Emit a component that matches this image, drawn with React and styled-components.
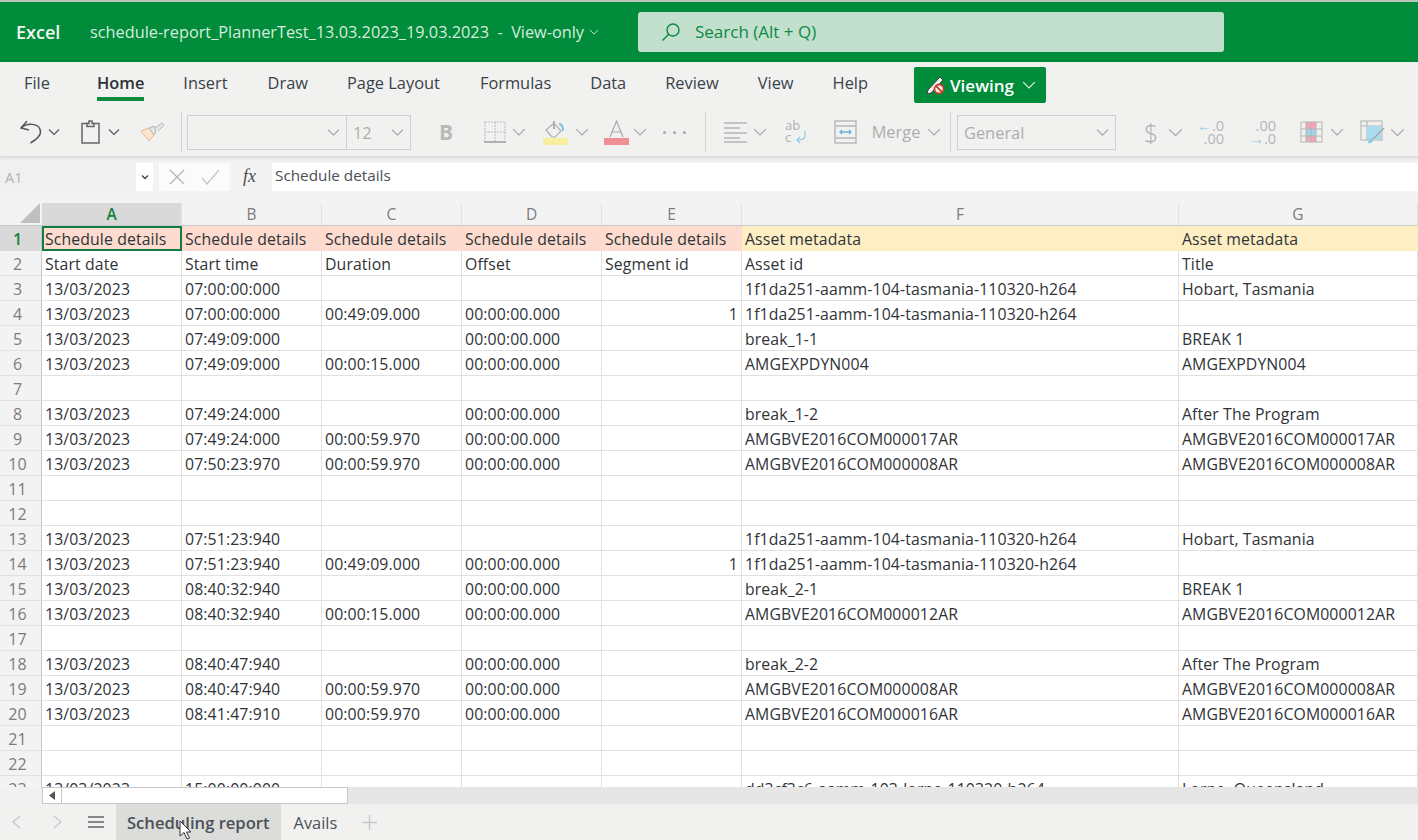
import React from "react";
import styled, { createGlobalStyle } from "styled-components";

const Global = createGlobalStyle`
  html, body { margin: 0; padding: 0; width: 1418px; height: 840px; overflow: hidden; background: #f3f3f3; }
  * { box-sizing: border-box; }
  body { font-family: "Open Sans", "Noto Sans", sans-serif; }
`;

const Page = styled.div`
  width: 1418px; height: 840px; display: flex; flex-direction: column; overflow: hidden; background: #f3f3f3;
`;
const TitleBar = styled.header`
  height: 62px; flex: none; background: #008c3a; border-top: 2px solid #b9c4bc;
  display: flex; align-items: center; color: #fff;
`;
const Brand = styled.div`
  width: 90px; padding-left: 16px; font-size: 18px; font-weight: 600; color: #f2f7f3;
`;
const DocName = styled.div`
  width: 548px; font-size: 16.3px; color: #d7ecdf; display: flex; align-items: center; gap: 5px; white-space: nowrap;
`;
const SearchBox = styled.div`
  width: 586px; height: 40px; border-radius: 3px; background: #c3dfcd; color: #0a8a45;
  display: flex; align-items: center; gap: 14px; padding-left: 23px; font-size: 17px; margin-top: -1px;
`;
const TabBar = styled.nav`
  height: 45px; flex: none; display: flex; align-items: flex-start; padding: 0 0 0 24px; background: #f1f1f0;
`;
const TabItem = styled.div`
  font-size: 16.4px; line-height: 22px; margin-top: 10px; margin-right: ${p => p.$gap}px; color: #39424a;
  position: relative; font-weight: ${p => (p.$active ? 600 : 400)}; white-space: nowrap;
  ${p => p.$active && `
    color: #2c3136;
    &::after { content: ""; position: absolute; left: 0; right: 0; top: 25px; height: 4px; background: #10893e; }
  `}
`;
const ViewingButton = styled.div`
  width: 132px; height: 36px; margin-top: 5px; margin-left: auto; margin-right: 372px; background: #008c3a; border-radius: 2px; color: #fff;
  display: flex; align-items: center; padding-left: 12px; gap: 4px; font-size: 17px; font-weight: 600;
`;
const Toolbar = styled.div`
  height: 50px; flex: none; display: flex; align-items: center; padding: 1px 0 0 20px; background: #f1f1f0;
  border-bottom: 1px solid #dcdcdc; box-shadow: 0 2px 3px rgba(0,0,0,.08); color: #b5b5b5; position: relative;
`;
const Group = styled.div`
  display: flex; align-items: center; gap: ${p => p.$gap ?? 3}px; margin-left: ${p => p.$left ?? 0}px; flex: none;
`;
const Separator = styled.div`
  width: 1px; height: 40px; background: #d4d4d4; flex: none; margin-left: ${p => p.$left}px;
`;
const Select = styled.div`
  height: 35px; width: ${p => p.$w}px; border: 1px solid #cfcfcf; margin-left: ${p => p.$left ?? 0}px;
  ${p => p.$noLeft && "border-left: 0;"}
  display: flex; align-items: center; justify-content: space-between; padding: 0 6px;
  font-size: 16.4px; color: #adadad; flex: none;
`;
const GreyLabel = styled.span`
  font-size: ${p => p.$size ?? 16.4}px; font-weight: ${p => p.$weight ?? 400}; color: #adadad; width: ${p => p.$w}px; line-height: 1; text-align: center;
`;
const BoldB = styled.span`
  font-size: 21px; font-weight: 700; color: #b9b9b9; width: 16px; text-align: center;
`;
const Dots = styled.span`
  width: 23px; display: flex; justify-content: space-between;
`;
const Dot = styled.i`
  width: 3px; height: 3px; border-radius: 50%; background: #a9a9a9;
`;
const Decimal = styled.span`
  display: flex; flex-direction: column; align-items: flex-end; width: ${p => p.$w}px; font-size: 14.5px; line-height: 13px; color: #b5b5b5; white-space: nowrap;
`;
const Arrow = styled.b`
  color: #8fcae6; font-weight: 400; font-size: 15px;
`;
const FormulaRow = styled.div`
  height: 28px; flex: none; margin-top: 6px; display: flex; background: #f3f3f3;
`;
const NameBox = styled.div`
  width: 153px; height: 100%; display: flex; align-items: center; justify-content: space-between;
  background: #f0f0f0; color: #b3b3b3; font-size: 14.5px; padding-left: 5px;
`;
const NameCaret = styled.div`
  width: 17px; height: 100%; background: #fff; display: flex; align-items: center; justify-content: center; color: #555;
`;
const FxButtons = styled.div`
  width: 71px; height: 100%; margin-left: 6px; background: #fbfbfb; display: flex; align-items: center; justify-content: center; gap: 16px;
`;
const FxLabel = styled.div`
  width: 42px; height: 100%; display: flex; align-items: center; justify-content: center; padding: 0 3px 1px 0;
  font-family: "Liberation Serif", serif; font-style: italic; font-size: 18px; color: #4d4d4d;
`;
const FormulaInput = styled.div`
  flex: 1; height: 100%; background: #fff; padding-left: 3px; font-size: 15.3px; line-height: 24px; color: #4a5056;
`;
const SheetArea = styled.div`
  flex: none; height: 584px; margin-top: 12px; overflow: hidden; background: #fff;
  display: grid; grid-template-columns: 42px 140px 140px 140px 140px 140px 437px 239px;
  grid-template-rows: 23px; grid-auto-rows: 25px; align-content: start;
`;
const Corner = styled.div`
  background: #f3f3f3; display: flex; justify-content: flex-end; align-items: flex-end; padding: 0 2px 2px 0;
  border-bottom: 1px solid #c9c9c9;
`;
const ColHead = styled.div`
  background: ${p => (p.$on ? "#d9d9d9" : "#f3f3f3")};
  color: ${p => (p.$on ? "#15803f" : "#7c7c7c")}; font-weight: ${p => (p.$on ? 600 : 400)};
  display: flex; align-items: center; justify-content: center; font-size: 15.5px;
  border-right: 1px solid #e2e2e2; border-bottom: 1px solid #c9c9c9;
`;
const RowHead = styled.div`
  background: ${p => (p.$on ? "#d9d9d9" : "#f3f3f3")};
  color: ${p => (p.$on ? "#15803f" : "#7c7c7c")}; font-weight: ${p => (p.$on ? 600 : 400)};
  display: flex; align-items: center; justify-content: center; font-size: 16px;
  border-right: 1px solid #c9c9c9; border-bottom: 1px solid ${p => (p.$on ? "#d9d9d9" : "#e2e2e2")};
  padding: 1px 6px 0 0;
`;
const Cell = styled.div`
  background: ${p => p.$bg || "#fff"};
  border-right: 1px solid ${p => (p.$bg ? p.$bg : "#e1e1e1")};
  border-bottom: 1px solid ${p => (p.$bg ? p.$bg : "#e1e1e1")};
  padding: 1px 3px 0; font-size: 15.8px; letter-spacing: .12px; line-height: 25px; color: #2f3338; white-space: nowrap;
  overflow: hidden; position: relative; text-align: ${p => (p.$right ? "right" : "left")};
  ${p => p.$sel && "outline: 2px solid #107c41; outline-offset: -2px; z-index: 1; overflow: visible;"}
`;
const ScrollRow = styled.div`
  height: 17px; flex: none; display: flex; padding-left: 42px; background: #e6e6e6; position: relative;
`;
const ScrollGutter = styled.div`
  position: absolute; left: 0; top: 0; bottom: 0; width: 42px; background: #f1f1f1;
`;
const ScrollButton = styled.div`
  width: 20px; height: 100%; background: #fff; border: 1px solid #c8c8c8; display: flex; align-items: center; justify-content: center;
`;
const ScrollThumb = styled.div`
  width: 286px; height: 100%; background: #fff; border: 1px solid #c8c8c8; border-left: 0;
`;
const SheetTabs = styled.footer`
  height: 36px; flex: none; display: flex; align-items: stretch; background: #f1f1f0; position: relative;
`;
const NavGroup = styled.div`
  width: 116px; display: flex; align-items: center; padding-left: 11px;
`;
const NavSlot = styled.div`
  width: ${p => p.$w}px; display: flex; justify-content: flex-start;
`;
const SheetTab = styled.div`
  padding: 0 ${p => (p.$active ? 11 : 13)}px; font-size: ${p => (p.$active ? 16.6 : 16.4)}px; display: flex; align-items: center; color: #4b5158;
  background: ${p => (p.$active ? "#dcdcda" : "transparent")}; font-weight: ${p => (p.$active ? 600 : 400)};
`;
const AddTab = styled.div`
  display: flex; align-items: center; margin-left: 12px;
`;
const Cursor = styled.svg`
  position: absolute; left: 179px; top: 16px;
`;

const Chev = ({ c = "#8a8a8a", s = 14 }) => (
  <svg width={s} height={s} viewBox="0 0 12 12" fill="none" stroke={c} strokeWidth="1.1"><path d="M1 3.5l5 5 5-5" /></svg>
);

const columns = ["A", "B", "C", "D", "E", "F", "G"];
const S = "Schedule details", M = "Asset metadata";
const T = "1f1da251-aamm-104-tasmania-110320-h264";
const D = "13/03/2023", Z = "00:00:00.000";
const rows = [
  [S, S, S, S, S, M, M],
  ["Start date", "Start time", "Duration", "Offset", "Segment id", "Asset id", "Title"],
  [D, "07:00:00:000", "", "", "", T, "Hobart, Tasmania"],
  [D, "07:00:00:000", "00:49:09.000", Z, "1", T, ""],
  [D, "07:49:09:000", "", Z, "", "break_1-1", "BREAK 1"],
  [D, "07:49:09:000", "00:00:15.000", Z, "", "AMGEXPDYN004", "AMGEXPDYN004"],
  ["", "", "", "", "", "", ""],
  [D, "07:49:24:000", "", Z, "", "break_1-2", "After The Program"],
  [D, "07:49:24:000", "00:00:59.970", Z, "", "AMGBVE2016COM000017AR", "AMGBVE2016COM000017AR"],
  [D, "07:50:23:970", "00:00:59.970", Z, "", "AMGBVE2016COM000008AR", "AMGBVE2016COM000008AR"],
  ["", "", "", "", "", "", ""],
  ["", "", "", "", "", "", ""],
  [D, "07:51:23:940", "", "", "", T, "Hobart, Tasmania"],
  [D, "07:51:23:940", "00:49:09.000", Z, "1", T, ""],
  [D, "08:40:32:940", "", Z, "", "break_2-1", "BREAK 1"],
  [D, "08:40:32:940", "00:00:15.000", Z, "", "AMGBVE2016COM000012AR", "AMGBVE2016COM000012AR"],
  ["", "", "", "", "", "", ""],
  [D, "08:40:47:940", "", Z, "", "break_2-2", "After The Program"],
  [D, "08:40:47:940", "00:00:59.970", Z, "", "AMGBVE2016COM000008AR", "AMGBVE2016COM000008AR"],
  [D, "08:41:47:910", "00:00:59.970", Z, "", "AMGBVE2016COM000016AR", "AMGBVE2016COM000016AR"],
  ["", "", "", "", "", "", ""],
  ["", "", "", "", "", "", ""],
  [D, "15:00:00:000", "", "", "", "dd3cf3c6-aamm-103-lorne-110320-h264", "Lorne, Queensland"],
];
const tabs = [["File", 47], ["Home", 39], ["Insert", 40], ["Draw", 39], ["Page Layout", 40], ["Formulas", 39], ["Data", 39], ["Review", 39], ["View", 39], ["Help", 0]];

export default function App() {
  return (
    <Page>
      <Global />
      <TitleBar>
        <Brand>Excel</Brand>
        <DocName>
          <span>schedule-report_PlannerTest_13.03.2023_19.03.2023&nbsp; -&nbsp; View-only</span>
          <Chev c="#d7ecdf" s={10} />
        </DocName>
        <SearchBox>
          <svg width="20" height="20" viewBox="0 0 20 20" fill="none" stroke="#0a8a45" strokeWidth="1.4"><circle cx="12" cy="8" r="6" /><path d="M7.5 12.5L1.5 18.5" /></svg>
          <span>Search (Alt + Q)</span>
        </SearchBox>
      </TitleBar>
      <TabBar>
        {tabs.map(([t, g]) => <TabItem key={t} $gap={g} $active={t === "Home"}>{t}</TabItem>)}
        <ViewingButton>
          <svg width="20" height="20" viewBox="0 0 20 20" fill="none">
            <path d="M1 19l1-4L14 2l3 3L5 18z" fill="#f4f4f4" stroke="#3d3d3d" strokeWidth="1" />
            <circle cx="13" cy="14" r="4.500" fill="#fff" stroke="#c8402f" strokeWidth="1.800" />
            <path d="M10 11l6 6" stroke="#c8402f" strokeWidth="1.800" />
          </svg>
          <span>Viewing</span>
          <span style={{ marginLeft: 4, display: "flex" }}><Chev c="#d9efe2" s={14} /></span>
        </ViewingButton>
      </TabBar>
      <Toolbar>
        <Group $gap={6}>
          <svg width="22" height="24" viewBox="0 0 22 24" fill="none" stroke="#555" strokeWidth="1.5"><path d="M7 1L1 8l8 2" /><path d="M1.5 8C6 3 20 2 20.500 12c.2 4-5 8-10 11" /></svg>
          <Chev c="#555" s={12} />
        </Group>
        <Group $left={21} $gap={8}>
          <svg width="19" height="24" viewBox="0 0 19 24" fill="none" stroke="#666" strokeWidth="1.5"><rect x="1" y="3.500" width="17" height="19.500" /><path d="M6 6.500V3.500h2V1h3v2.500h2v3z" fill="#f1f1f0" /></svg>
          <Chev c="#555" s={12} />
        </Group>
        <Group $left={20}>
          <svg width="26" height="22" viewBox="0 0 26 22" fill="none"><path d="M1 10l8-3 5 7-5 6z" fill="#fae3cf" stroke="#eeb88c" /><path d="M9 7l5-2 2 5-2 4z" fill="#e5e5e5" stroke="#b5b5b5" /><path d="M15 7l7-5 2 2-6 6" fill="#e8e8e8" stroke="#b5b5b5" /></svg>
        </Group>
        <Separator $left={15} />
        <Select $left={5} $w={160}>
          <span />
          <Chev c="#a9a9a9" s={13} />
        </Select>
        <Select $w={64} $noLeft>
          <span>12</span>
          <Chev c="#a9a9a9" s={13} />
        </Select>
        <Group $left={27}><BoldB>B</BoldB></Group>
        <Group $left={30} $gap={6}>
          <svg width="22" height="22" viewBox="0 0 22 22" fill="none" stroke="#c0c0c0" strokeWidth="1.1"><rect x="1" y="1" width="20" height="20" strokeDasharray="2 1" /><path d="M11 1v20M1 11h20" strokeDasharray="2 1" /><path d="M0 21h22" stroke="#a5a5a5" strokeWidth="1.6" /></svg>
          <Chev c="#a9a9a9" />
        </Group>
        <Group $left={17} $gap={7}>
          <svg width="25" height="26" viewBox="0 0 25 26" fill="none"><path d="M3 11l8-7 7 8-6 6-3 0z" stroke="#aeaeae" strokeWidth="1.2" /><path d="M11 10V2" stroke="#aeaeae" strokeWidth="2" /><path d="M16 5c3 0 4 3 4 7" stroke="#71bedf" strokeWidth="1.800" /><rect x="0" y="19" width="25" height="7" fill="#f6ef9b" /></svg>
          <Chev c="#a9a9a9" />
        </Group>
        <Group $left={15} $gap={4}>
          <svg width="25" height="26" viewBox="0 0 25 26" fill="none" stroke="#a9a9a9" strokeWidth="1.2"><path d="M6 18L12.500 2 19 18M8 13h9" /><rect x="0" y="19" width="25" height="7" fill="#ef8f95" stroke="none" /></svg>
          <Chev c="#a9a9a9" />
        </Group>
        <Group $left={16}><Dots><Dot /><Dot /><Dot /></Dots></Group>
        <Separator $left={19} />
        <Group $left={17} $gap={5}>
          <svg width="25" height="24" viewBox="0 0 25 24" fill="none" stroke="#b5b5b5" strokeWidth="1.5"><path d="M1 3h23M1 8h16M1 13h23M1 18h16M1 22h23" /></svg>
          <Chev c="#a9a9a9" />
        </Group>
        <Group $left={17}>
          <svg width="24" height="26" viewBox="0 0 24 26" fill="none"><text x="1" y="11" fontSize="13" fill="#b0b0b0" fontFamily="Open Sans">ab</text><text x="1" y="23" fontSize="13" fill="#b0b0b0" fontFamily="Open Sans">c</text><path d="M21 12v5c0 3-3 4-8 4m3-3l-3 3 3 3" stroke="#8fcae6" strokeWidth="1.2" /></svg>
        </Group>
        <Group $left={26}>
          <svg width="23" height="24" viewBox="0 0 23 24" fill="none" stroke="#b5b5b5" strokeWidth="1.4"><rect x="1" y="1" width="21" height="22" /><path d="M1 6h21M1 18h21" /><path d="M6 12h11M8 10l-2 2 2 2M15 10l2 2-2 2" stroke="#6cb4db" /></svg>
        </Group>
        <Group $left={14} $gap={6}>
          <GreyLabel $w={50}>Merge</GreyLabel>
          <Chev c="#a9a9a9" />
        </Group>
        <Separator $left={9} />
        <Select $left={6} $w={159}>
          <span>General</span>
          <Chev c="#a9a9a9" s={13} />
        </Select>
        <Group $left={28} $gap={10}>
          <GreyLabel $w={14} $size={25} $weight={300}>$</GreyLabel>
          <Chev c="#a9a9a9" s={15} />
        </Group>
        <Group $left={14}>
          <Decimal $w={27}><span><Arrow>←</Arrow>.0</span><span>.00</span></Decimal>
        </Group>
        <Group $left={26}>
          <Decimal $w={26}><span>.00</span><span><Arrow>→</Arrow>.0</span></Decimal>
        </Group>
        <Group $left={24} $gap={7}>
          <svg width="23" height="22" viewBox="0 0 23 22" fill="none" stroke="#b5b5b5" strokeWidth="1"><rect x="6" y="1" width="10" height="7" fill="#f4a6b5" stroke="none" /><rect x="6" y="15" width="10" height="6" fill="#f4a6b5" stroke="none" /><rect x="6" y="8" width="10" height="7" fill="#9fd3ea" stroke="none" /><rect x="1" y="1" width="21" height="20" /><path d="M6 1v20M11 1v20M16 1v20M1 8h21M1 15h21" /></svg>
          <Chev c="#a9a9a9" />
        </Group>
        <Group $left={16} $gap={5}>
          <svg width="25" height="26" viewBox="0 0 25 26" fill="none" stroke="#b5b5b5" strokeWidth="1.1"><rect x="1" y="2" width="21" height="19" /><path d="M1 7h21M7 2v19" /><rect x="7" y="7" width="14" height="13" fill="#a9dcef" stroke="none" /><path d="M24 9L12 21" stroke="#a8a8a8" strokeWidth="1.6" /><path d="M13 19c-2-1-5 1-5 5 4 1 6-2 5-5z" fill="#8fcde6" stroke="none" /></svg>
          <Chev c="#a9a9a9" s={15} />
        </Group>
      </Toolbar>
      <FormulaRow>
        <NameBox>
          <span>A1</span>
          <NameCaret><svg width="8" height="8" viewBox="0 0 8 8" fill="none" stroke="#444" strokeWidth="1.4"><path d="M1 2.500l3 3 3-3" /></svg></NameCaret>
        </NameBox>
        <FxButtons>
          <svg width="16" height="16" viewBox="0 0 16 16" fill="none" stroke="#b3b3b3" strokeWidth="1.2"><path d="M1 1l14 14M15 1L1 15" /></svg>
          <svg width="19" height="16" viewBox="0 0 19 16" fill="none" stroke="#c4c4c4" strokeWidth="1.2"><path d="M1 9l5 6L18 1" /></svg>
        </FxButtons>
        <FxLabel>fx</FxLabel>
        <FormulaInput>Schedule details</FormulaInput>
      </FormulaRow>
      <SheetArea>
        <Corner>
          <svg width="20" height="20" viewBox="0 0 20 20"><path d="M20 0v20H0z" fill="#bfbfbf" /></svg>
        </Corner>
        {columns.map((c, i) => <ColHead key={c} $on={i === 0}>{c}</ColHead>)}
        {rows.map((r, ri) => (
          <React.Fragment key={ri}>
            <RowHead $on={ri === 0}>{ri + 1}</RowHead>
            {r.map((v, ci) => (
              <Cell
                key={ci}
                $sel={ri === 0 && ci === 0}
                $right={ci === 4 && v === "1"}
                $bg={ri === 0 ? (ci < 5 ? "#fddccf" : "#fdeec4") : undefined}
              >{v}</Cell>
            ))}
          </React.Fragment>
        ))}
      </SheetArea>
      <ScrollRow>
        <ScrollGutter />
        <ScrollButton><svg width="6" height="9" viewBox="0 0 6 9"><path d="M6 0v9L0 4.500z" fill="#555" /></svg></ScrollButton>
        <ScrollThumb />
      </ScrollRow>
      <SheetTabs>
        <NavGroup>
          <NavSlot $w={41}><svg width="11" height="16" viewBox="0 0 11 16" fill="none" stroke="#c9c9c9" strokeWidth="1.4"><path d="M9 2L2 8l7 6" /></svg></NavSlot>
          <NavSlot $w={36}><svg width="11" height="16" viewBox="0 0 11 16" fill="none" stroke="#c9c9c9" strokeWidth="1.4"><path d="M2 2l7 6-7 6" /></svg></NavSlot>
          <NavSlot $w={20}><svg width="16" height="14" viewBox="0 0 16 14" fill="none" stroke="#666" strokeWidth="1.6"><path d="M0 2h16M0 7h16M0 12h16" /></svg></NavSlot>
        </NavGroup>
        <SheetTab $active>Scheduling report</SheetTab>
        <SheetTab>Avails</SheetTab>
        <AddTab><svg width="15" height="15" viewBox="0 0 15 15" fill="none" stroke="#c9c9c9" strokeWidth="1.5"><path d="M7.500 0v15M0 7.500h15" /></svg></AddTab>
        <Cursor width="13" height="20" viewBox="0 0 13 20"><path d="M1 1v15l4-3.500L8 19l2.500-1-3-6H12z" fill="#fff" stroke="#333" strokeWidth="1" /></Cursor>
      </SheetTabs>
    </Page>
  );
}
